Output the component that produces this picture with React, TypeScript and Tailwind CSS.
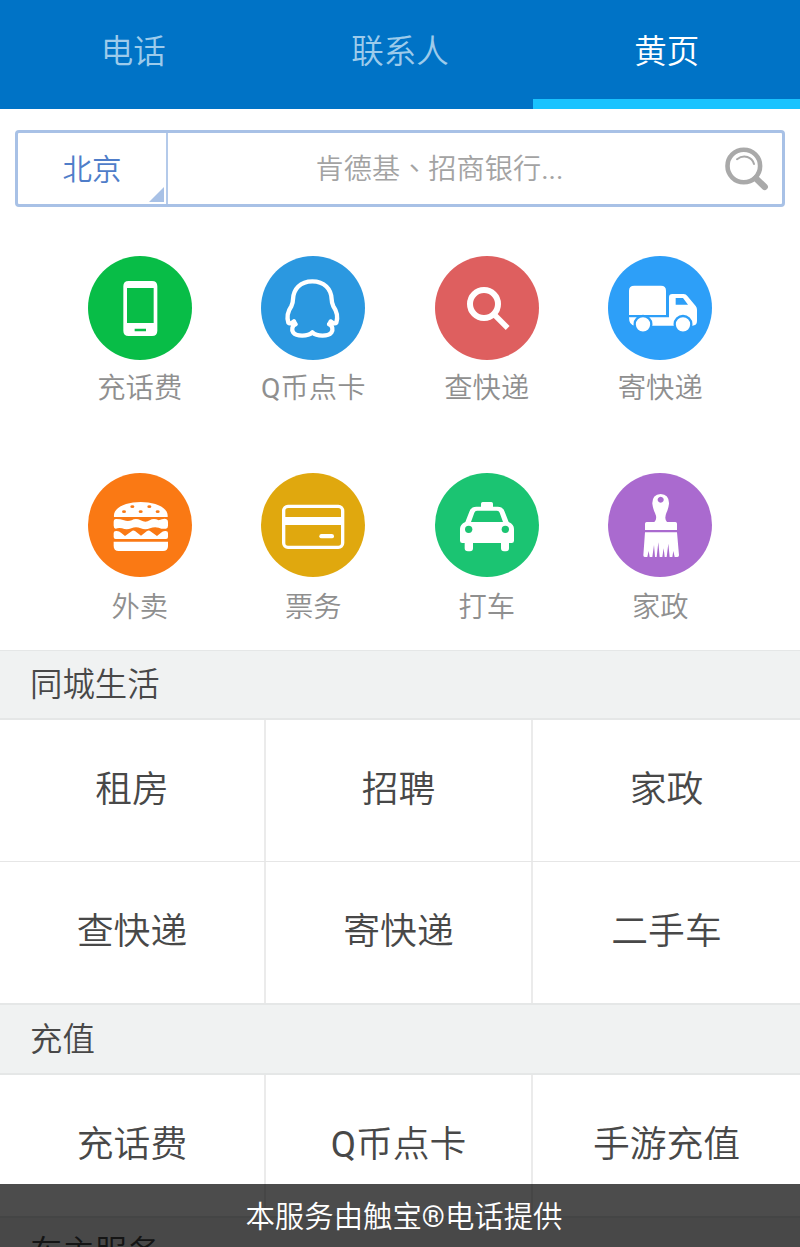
import type { ReactNode } from 'react';

interface Shortcut {
  label: string;
  color: string;
  viewBox: string;
  icon: ReactNode;
}

interface Section {
  title: string;
  rows: string[][];
}

const TABS = ['电话', '联系人', '黄页'];

const TOP_SHORTCUTS: Shortcut[] = [
  {
    label: '充话费',
    color: 'bg-[#08bd47]',
    viewBox: '24 18 312 312',
    icon: (
      <path
        fill="#fff"
        fillRule="evenodd"
        d="M146 93h70q16 0 16 16v133q0 16-16 16h-70q-16 0-16-16V109q0-16 16-16zM141 114v105h80V114zM164 236v8h34v-8z"
      />
    ),
  },
  {
    label: 'Q币点卡',
    color: 'bg-[#2b98e0]',
    viewBox: '24 18 312 312',
    icon: (
      <path
        fill="none"
        stroke="#fff"
        strokeWidth="13"
        strokeLinejoin="round"
        d="M178 94C142 94 121 117 120 148C120 158 118 163 115 169C106 182 101 202 106 218C110 222 117 220 123 214C124 218 126 221 128 223C117 227 115 240 121 248C131 260 164 260 178 247C192 260 225 260 235 248C241 240 239 227 228 223C230 221 232 218 233 214C239 220 246 222 250 218C255 202 250 182 241 169C238 163 236 158 236 148C235 117 214 94 178 94z"
      />
    ),
  },
  {
    label: '查快递',
    color: 'bg-[#de5f5f]',
    viewBox: '24 18 312 312',
    icon: (
      <g fill="none" stroke="#fff">
        <circle cx="171" cy="162" r="42" strokeWidth="18" />
        <path strokeWidth="16" d="M200 192l42 42" />
      </g>
    ),
  },
  {
    label: '寄快递',
    color: 'bg-[#2d9ff8]',
    viewBox: '24 18 312 312',
    icon: (
      <>
        <path
          fill="#fff"
          fillRule="evenodd"
          d="M103 107h80q15 0 15 15v73H87v-73q0-15 16-15zM87 202h120v-60q0-10 10-10h34q7 0 11 6l25 30q4 5 4 11v34q0 14-14 14H105q-18 0-18-25zM227 144v20h37l-15-20z"
        />
        <g fill="#fff" stroke="#2d9ff8" strokeWidth="7">
          <circle cx="129" cy="223" r="25" />
          <circle cx="249" cy="223" r="25" />
        </g>
      </>
    ),
  },
];

const BOTTOM_SHORTCUTS: Shortcut[] = [
  {
    label: '外卖',
    color: 'bg-[#fa7914]',
    viewBox: '24 24 312 312',
    icon: (
      <>
        <g fill="#fff">
          <path d="M102 156C98 127 139 111 182 111S266 127 263 156z" />
          <path d="M108 162q14 0 24 4q11 4 23 0q12-8 27 0t27 0t27 0q14-6 22-4q6 2 6 9v11q0 7-6 9q-11 2-22-3q-13-4-26 2q-14 6-28 0t-28 0t-28 0q-10-2-19 1q-6-1-6-9v-11q0-9 7-9z" />
          <path d="M101 204q0-6 7-6q9-1 16 6l11 9l22-16q4-2 8 1l18 14l18-14q4-3 8-1l22 16l11-9q7-7 15-6q7 0 7 6v12q0 6-6 6H107q-6 0-6-6z" />
          <path d="M101 230h163v13q0 15-15 15H116q-15 0-15-15z" />
        </g>
        <g fill="#fa7914">
          <ellipse cx="157" cy="125" rx="6" ry="4" />
          <ellipse cx="208" cy="125" rx="6" ry="4" />
          <ellipse cx="132" cy="140" rx="6" ry="4" />
          <ellipse cx="182" cy="140" rx="6" ry="4" />
          <ellipse cx="233" cy="140" rx="6" ry="4" />
        </g>
      </>
    ),
  },
  {
    label: '票务',
    color: 'bg-[#e0a80e]',
    viewBox: '24 24 312 312',
    icon: (
      <>
        <rect x="92" y="124" width="177" height="123" rx="13" fill="none" stroke="#fff" strokeWidth="10" />
        <path fill="#fff" d="M94 156h174v24H94z" />
        <rect x="199" y="207" width="44" height="13" rx="6.5" fill="#fff" />
      </>
    ),
  },
  {
    label: '打车',
    color: 'bg-[#1bc472]',
    viewBox: '24 24 312 312',
    icon: (
      <>
        <path
          fill="#fff"
          fillRule="evenodd"
          d="M162 125v-9q0-5 5-5h26q5 0 5 5v9h14q16 0 21 15l12 31q16 7 16 21v35q0 7-7 7h-8v16q0 9-9 9h-6q-9 0-9-9v-16h-84v16q0 9-9 9h-6q-10 0-10-9v-16h-7q-7 0-7-7v-35q0-14 16-21l12-31q5-15 21-15zM150 137q-6 0-8 6l-10 28h96l-10-28q-2-6-8-6z"
        />
        <circle cx="125" cy="193" r="11" fill="#1bc472" />
        <circle cx="235" cy="193" r="11" fill="#1bc472" />
      </>
    ),
  },
  {
    label: '家政',
    color: 'bg-[#aa6acf]',
    viewBox: '24 24 312 312',
    icon: (
      <>
        <path
          fill="#fff"
          fillRule="evenodd"
          d="M182 87q26 2 25 29q-2 16-8 28q-7 18 2 27h25q5 0 5 5v19h-96v-19q0-5 5-5h23q10-9 2-27q-6-12-8-28q-1-27 25-29zM182 95a9 9 0 1 0 .1 0z"
        />
        <path
          fill="#fff"
          d="M135 202H231L237 271Q237 276 232 276H224L220 258L217 276H209L205 236L200 276H194L191 250L187 276H179L175 232L170 276H165L162 240L157 276H149L146 258L142 276H134Q130 276 130 271Z"
        />
      </>
    ),
  },
];

const SECTIONS: Section[] = [
  {
    title: '同城生活',
    rows: [
      ['租房', '招聘', '家政'],
      ['查快递', '寄快递', '二手车'],
    ],
  },
  {
    title: '充值',
    rows: [['充话费', 'Q币点卡', '手游充值']],
  },
  { title: '车主服务', rows: [] },
];

// Latin glyphs look too thin next to the Chinese ones, so they get the regular weight
function Mixed({ text }: { text: string }) {
  return (
    <span>
      {text.split(/([A-Z®.]+)/).map((part, i) =>
        i % 2 === 1 ? (
          <span key={i} className="font-normal">
            {part}
          </span>
        ) : (
          part
        ),
      )}
    </span>
  );
}

function TabBar() {
  return (
    <nav className="grid h-[109px] grid-cols-3 bg-[#0073c6] text-[32.5px]">
      {TABS.map((tab) => (
        <button
          key={tab}
          type="button"
          className={
            tab === '黄页'
              ? 'border-b-[10px] border-[#19c3ff] pt-[6px] text-white'
              : 'border-b-[10px] border-transparent pt-[6px] text-[#9dcbeb]'
          }
        >
          {tab}
        </button>
      ))}
    </nav>
  );
}

function SearchBar() {
  return (
    <div className="mx-[15px] mt-[21px] flex h-[77px] rounded-[4px] border-3 border-[#a8c1e6]">
      <div className="relative flex w-[150px] items-center justify-center border-r-2 border-[#b4caea] pt-[3px] text-[29.5px] text-[#4f7dc9]">
        北京
        <svg className="absolute right-0.5 bottom-0.5" width="15" height="15" viewBox="0 0 15 15">
          <path d="M15 0v15H0z" fill="#a8c1e6" />
        </svg>
      </div>
      <div className="flex-1 self-center pr-[12px] text-center text-[28.2px] text-[#a3a3a3]">
        <span>肯德基</span>
        <span lang="zh-TW" className="font-['Noto_Sans_CJK_TC',sans-serif]">、</span>
        <Mixed text="招商银行..." />
      </div>
      <svg className="mt-[13px] mr-[13px]" width="46" height="46" viewBox="0 0 46 46" fill="none" stroke="#a9a9a9">
        <circle cx="20.8" cy="20" r="16.3" strokeWidth="4.6" />
        <path d="M14 13.2C21 8 29 11 31 18" strokeWidth="2" strokeLinecap="round" />
        <path d="M33 32.5l8.7 8.4" strokeWidth="6.4" strokeLinecap="round" />
      </svg>
    </div>
  );
}

function ShortcutRow({ items, labelClass }: { items: Shortcut[]; labelClass: string }) {
  return (
    <div className="grid grid-cols-4 px-[53px]">
      {items.map((item) => (
        <div key={item.label} className="flex flex-col items-center">
          <div className={`size-[104px] rounded-full ${item.color}`}>
            <svg className="size-full" viewBox={item.viewBox}>
              {item.icon}
            </svg>
          </div>
          <div className={`text-[28.3px] leading-[40px] text-[#8f8f8f] ${labelClass}`}>
            <Mixed text={item.label} />
          </div>
        </div>
      ))}
    </div>
  );
}

function SectionBlock({ section, first }: { section: Section; first: boolean }) {
  return (
    <section>
      <h2
        className={`border-[#e5e7e7] bg-[#f0f2f2] pl-[30px] text-[32.4px] text-[#484848] ${
          first ? 'h-[70px] border-t border-b-2 leading-[68px]' : 'h-[72px] border-y-2 leading-[70px]'
        }`}
      >
        {section.title}
      </h2>
      {section.rows.map((row, i) => (
        <div
          key={i}
          className={`grid grid-cols-[266px_267px_267px] ${i > 0 ? 'h-[142px] border-t border-[#e6e6e6]' : 'h-[141px]'}`}
        >
          {row.map((name, col) => (
            <div
              key={name}
              className={`flex items-center justify-center pb-[2px] text-[36.8px] text-[#484848] ${
                col < 2 ? 'border-r-2 border-[#ebebeb]' : ''
              }`}
            >
              <Mixed text={name} />
            </div>
          ))}
        </div>
      ))}
    </section>
  );
}

export default function App() {
  return (
    <div
      lang="zh-CN"
      className="relative h-[1247px] w-[800px] overflow-hidden bg-white font-['Roboto','Noto_Sans_CJK_SC',sans-serif] font-[350]"
    >
      <TabBar />
      <SearchBar />
      <div className="mt-[49px] flex h-[394px] flex-col gap-[57px]">
        <ShortcutRow items={TOP_SHORTCUTS} labelClass="mt-[9px] mb-[7px]" />
        <ShortcutRow items={BOTTOM_SHORTCUTS} labelClass="mt-[11px]" />
      </div>
      {SECTIONS.map((section, i) => (
        <SectionBlock key={section.title} section={section} first={i === 0} />
      ))}
      <footer className="absolute inset-x-0 bottom-0 flex h-[63px] items-center justify-center bg-black/70 pt-[4px] pl-2 text-[29.4px] text-white">
        <Mixed text="本服务由触宝®电话提供" />
      </footer>
    </div>
  );
}
